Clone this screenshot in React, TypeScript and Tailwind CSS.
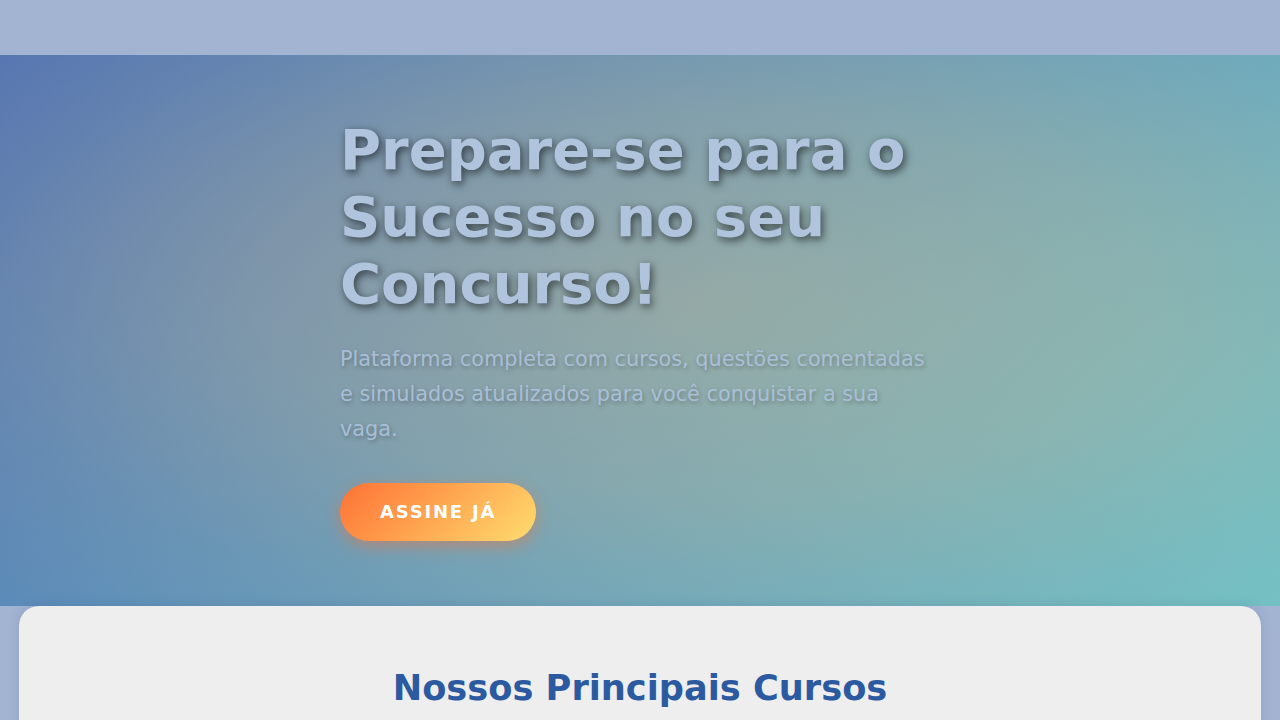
import React from 'react';

const font = { fontFamily: '"DejaVu Sans", Verdana, sans-serif' };

export default function App() {
  return (
    <div className="min-h-screen bg-[#a3b3d2]" style={font}>
      {/* Header band (empty) */}
      <header className="h-[55px] bg-[#a3b3d2]" />

      {/* Hero */}
      <section className="bg-[radial-gradient(ellipse_at_55%_45%,rgba(255,200,120,0.32)_0%,rgba(255,200,120,0.22)_45%,rgba(255,200,120,0.08)_75%,rgba(255,200,120,0)_100%),linear-gradient(135deg,#5274b3_0%,#70c0c6_100%)] pt-[61px] pb-[65px]">
        <div className="mx-auto w-[600px]">
          <h1 className="m-0 mb-[24px] text-[56px] font-bold leading-[1.2] text-[#b0c4de] [text-shadow:2px_3px_8px_rgba(0,0,0,0.6)]">
            Prepare-se para o Sucesso no seu Concurso!
          </h1>
          <p className="mb-[36px] text-[20.8px] leading-[35px] text-[#b0c4de]/90 [text-shadow:1px_2px_4px_rgba(0,0,0,0.25)]">
            Plataforma completa com cursos, questões comentadas e simulados atualizados para você conquistar a sua vaga.
          </p>
          <button className="rounded-full bg-[linear-gradient(135deg,#ff7235_0%,#ffdd6e_100%)] px-[40px] py-[18px] text-[18px] font-bold leading-[22px] tracking-[1.8px] text-white shadow-[0_5px_15px_rgba(255,110,50,0.45)]">
            ASSINE JÁ
          </button>
        </div>
      </section>

      {/* Courses */}
      <section className="mx-auto w-[97%] rounded-t-[20px] bg-[#eeeeee] pt-[56px] pb-16 shadow-[0_0_12px_rgba(40,60,120,0.15)]">
        <h2 className="text-center text-[35.2px] font-bold text-[#2c5aa0]">Nossos Principais Cursos</h2>
      </section>
    </div>
  );
}
